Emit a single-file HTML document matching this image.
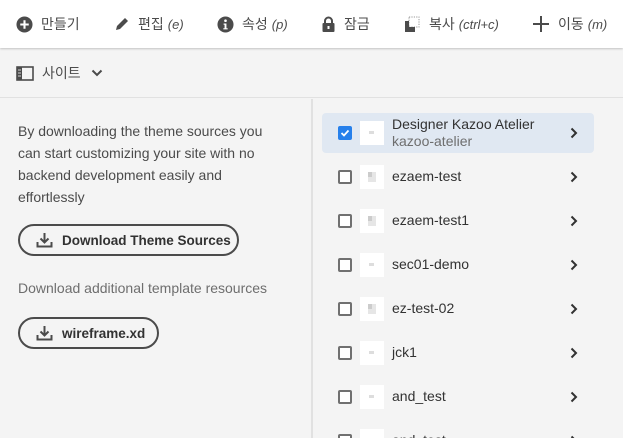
<!DOCTYPE html>
<html style="overflow:hidden;height:438px"><head><meta charset="utf-8"><style>
*{box-sizing:border-box;margin:0;padding:0}
body{width:623px;height:438px;overflow:hidden;background:#f4f4f4;font-family:"Liberation Sans","Noto Sans CJK KR",sans-serif;color:#323232;position:relative}
.tb{position:absolute;left:0;top:0;width:623px;height:48px;background:#fff;box-shadow:0 1px 2px rgba(0,0,0,.2);z-index:2}
.ti{position:absolute;top:14px;font-size:14px;color:#4b4b4b;display:flex;align-items:center;height:20px;white-space:nowrap}
.ti svg{margin-right:8px}
.ti i{font-size:13px;color:#4b4b4b;margin-left:4px}
.sub{position:absolute;left:0;top:48px;width:623px;height:50px;border-bottom:1px solid #e1e1e1}
.left{position:absolute;left:0;top:99px;width:313px;height:339px;border-right:2px solid #e1e1e1}
.p{position:absolute;left:18px;top:120px;width:295px;font-size:14px;line-height:22px;color:#4b4b4b;white-space:nowrap}
.btn{position:absolute;left:18px;height:32px;border:2px solid #4b4b4b;border-radius:16px;font-size:13.5px;font-weight:bold;display:flex;align-items:center;padding-left:16px;color:#323232}
.btn svg{margin-right:9px}
.row{position:absolute;left:322px;width:272px;height:40px;border-radius:4px}
.cb{position:absolute;left:16px;top:13px;width:14px;height:14px;border:2px solid #707070;border-radius:2px;background:#fff}
.th{position:absolute;left:38px;top:8px;width:24px;height:24px;background:#fff}
.th::after{content:"";position:absolute;left:9px;top:10px;width:5px;height:3px;background:#ddd}
.th.g::after{left:8px;top:7px;width:8px;height:10px;background:linear-gradient(#ccc,#ccc) 0 0/4px 5px no-repeat,#e6e6e6}
.nm{position:absolute;left:70px;top:11px;font-size:14px;color:#323232}
.ch{position:absolute;left:248px;top:14px}
</style></head><body>
<div class="tb">
<div class="ti" style="left:16px"><svg width="17" height="17" viewBox="0 0 18 18"><circle cx="9" cy="9" r="8.5" fill="#4b4b4b"/><path d="M9 4.5v9M4.5 9h9" stroke="#fff" stroke-width="2.2"/></svg>만들기</div>
<div class="ti" style="left:114px"><svg width="16" height="16" viewBox="0 0 16 16"><path d="M2 14l1-4 8-8 3 3-8 8z" fill="#4b4b4b"/></svg>편집<i>(e)</i></div>
<div class="ti" style="left:217px"><svg width="17" height="17" viewBox="0 0 18 18"><circle cx="9" cy="9" r="8.5" fill="#4b4b4b"/><circle cx="9" cy="5" r="1.4" fill="#fff"/><path d="M7 8h3v5h1.3v1.2H6.7V13H8V9.2H7z" fill="#fff"/></svg>속성<i>(p)</i></div>
<div class="ti" style="left:321px"><svg width="15" height="17" viewBox="0 0 15 17"><path d="M4 7V5a3.5 3.5 0 017 0v2" stroke="#4b4b4b" stroke-width="2" fill="none"/><rect x="1.5" y="7" width="12" height="9" rx="1" fill="#4b4b4b"/><rect x="6.5" y="10" width="2" height="3" fill="#fff"/></svg>잠금</div>
<div class="ti" style="left:404px"><svg width="17" height="17" viewBox="0 0 17 17"><rect x="5" y="1" width="10" height="10" fill="none" stroke="#999" stroke-dasharray="1.2 1.2"/><path d="M1 5h4v6h6v5H1z" fill="#4b4b4b"/></svg>복사<i>(ctrl+c)</i></div>
<div class="ti" style="left:532px"><svg width="18" height="18" viewBox="0 0 18 18"><path d="M9 1v16M1 9h16" stroke="#4b4b4b" stroke-width="2"/></svg>이동<i>(m)</i></div>
</div>
<div class="sub"><div class="ti" style="left:16px;top:15px;color:#4b4b4b"><svg width="18" height="15" viewBox="0 0 18 15"><rect x="1" y="1" width="16" height="13" fill="none" stroke="#4b4b4b" stroke-width="1.6"/><rect x="1" y="1" width="5" height="13" fill="#4b4b4b"/><path d="M2 4h3M2 7h3M2 10h3" stroke="#fff" stroke-width=".8"/></svg>사이트<svg style="margin-left:10px" width="12" height="8" viewBox="0 0 12 8"><path d="M1.5 1.5l4.5 4.5 4.5-4.5" stroke="#4b4b4b" stroke-width="2" fill="none"/></svg></div></div>
<div class="left"></div>
<div class="p">By downloading the theme sources you<br>can start customizing your site with no<br>backend development easily and<br>effortlessly</div>
<div class="btn" style="top:224px;width:221px"><svg width="17" height="16" viewBox="0 0 17 16"><path d="M8.5 1v9M4.5 6.5l4 4 4-4M1.5 10v4.5h14V10" stroke="#4b4b4b" stroke-width="2" fill="none"/></svg>Download Theme Sources</div>
<div style="position:absolute;left:18px;top:280px;font-size:14px;color:#6e6e6e">Download additional template resources</div>
<div class="btn" style="top:317px;width:141px"><svg width="17" height="16" viewBox="0 0 17 16"><path d="M8.5 1v9M4.5 6.5l4 4 4-4M1.5 10v4.5h14V10" stroke="#4b4b4b" stroke-width="2" fill="none"/></svg>wireframe.xd</div>

<div class="row" style="top:113px;background:#e0e8f2"><div class="cb" style="background:#2680eb;border-color:#2680eb"><svg width="10" height="10" viewBox="0 0 10 10" style="position:absolute;left:0;top:0"><path d="M1.5 5l2.5 2.5 4.5-5" stroke="#fff" stroke-width="1.8" fill="none"/></svg></div><div class="th"></div><div class="nm" style="top:3px;line-height:17px">Designer Kazoo Atelier<br><span style="color:#6e6e6e">kazoo-atelier</span></div><svg class="ch" width="8" height="12" viewBox="0 0 8 12"><path d="M1.5 1.5l4.5 4.5-4.5 4.5" stroke="#323232" stroke-width="2" fill="none"/></svg></div>
<div class="row" style="top:157px"><div class="cb"></div><div class="th g"></div><div class="nm">ezaem-test</div><svg class="ch" width="8" height="12" viewBox="0 0 8 12"><path d="M1.5 1.5l4.5 4.5-4.5 4.5" stroke="#323232" stroke-width="2" fill="none"/></svg></div>
<div class="row" style="top:201px"><div class="cb"></div><div class="th g"></div><div class="nm">ezaem-test1</div><svg class="ch" width="8" height="12" viewBox="0 0 8 12"><path d="M1.5 1.5l4.5 4.5-4.5 4.5" stroke="#323232" stroke-width="2" fill="none"/></svg></div>
<div class="row" style="top:245px"><div class="cb"></div><div class="th"></div><div class="nm">sec01-demo</div><svg class="ch" width="8" height="12" viewBox="0 0 8 12"><path d="M1.5 1.5l4.5 4.5-4.5 4.5" stroke="#323232" stroke-width="2" fill="none"/></svg></div>
<div class="row" style="top:289px"><div class="cb"></div><div class="th g"></div><div class="nm">ez-test-02</div><svg class="ch" width="8" height="12" viewBox="0 0 8 12"><path d="M1.5 1.5l4.5 4.5-4.5 4.5" stroke="#323232" stroke-width="2" fill="none"/></svg></div>
<div class="row" style="top:333px"><div class="cb"></div><div class="th"></div><div class="nm">jck1</div><svg class="ch" width="8" height="12" viewBox="0 0 8 12"><path d="M1.5 1.5l4.5 4.5-4.5 4.5" stroke="#323232" stroke-width="2" fill="none"/></svg></div>
<div class="row" style="top:377px"><div class="cb"></div><div class="th"></div><div class="nm">and_test</div><svg class="ch" width="8" height="12" viewBox="0 0 8 12"><path d="M1.5 1.5l4.5 4.5-4.5 4.5" stroke="#323232" stroke-width="2" fill="none"/></svg></div>
<div class="row" style="top:421px;height:17px;overflow:hidden"><div class="cb"></div><div class="th"></div><div class="nm">and_test</div><svg class="ch" width="8" height="12" viewBox="0 0 8 12"><path d="M1.5 1.5l4.5 4.5-4.5 4.5" stroke="#323232" stroke-width="2" fill="none"/></svg></div>
</body></html>
